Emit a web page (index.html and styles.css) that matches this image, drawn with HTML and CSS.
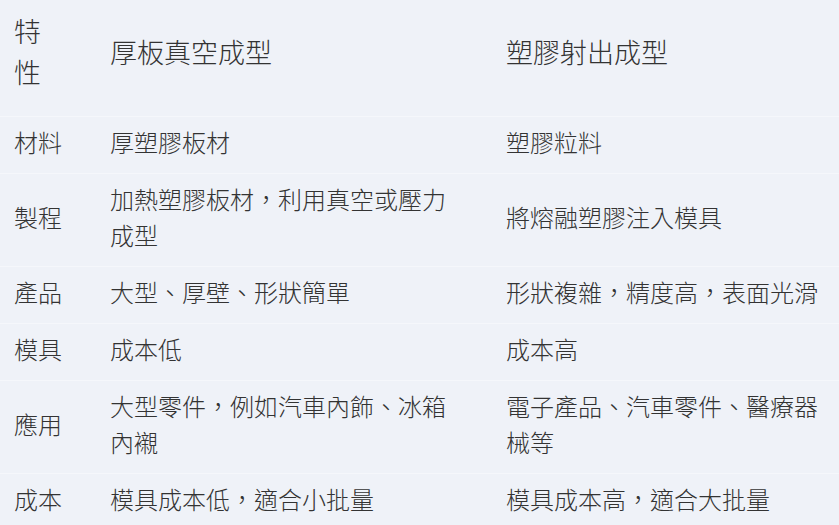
FILE: index.html
```html
<!DOCTYPE html>
<html lang="zh-Hant">
<head>
<meta charset="utf-8">
<link rel="stylesheet" href="styles.css">
</head>
<body>
<table class="cmp">
  <colgroup>
    <col class="c1"><col class="c2"><col class="c3">
  </colgroup>
  <thead>
    <tr class="head">
      <th class="k"><span class="kw">特性</span></th>
      <th class="mid">厚板真空成型</th>
      <th>塑膠射出成型</th>
    </tr>
  </thead>
  <tbody>
    <tr><td class="k">材料</td><td class="mid">厚塑膠板材</td><td>塑膠粒料</td></tr>
    <tr><td class="k">製程</td><td class="mid">加熱塑膠板材，利用真空或壓力成型</td><td>將熔融塑膠注入模具</td></tr>
    <tr><td class="k">產品</td><td class="mid">大型、厚壁、形狀簡單</td><td>形狀複雜，精度高，表面光滑</td></tr>
    <tr><td class="k">模具</td><td class="mid">成本低</td><td>成本高</td></tr>
    <tr><td class="k">應用</td><td class="mid">大型零件，例如汽車內飾、冰箱內襯</td><td>電子產品、汽車零件、醫療器械等</td></tr>
    <tr><td class="k">成本</td><td class="mid">模具成本低，適合小批量</td><td>模具成本高，適合大批量</td></tr>
  </tbody>
</table>
</body>
</html>
```
FILE: styles.css
```css
html, body {
  margin: 0;
  padding: 0;
  background: #eff2f8;
}
body {
  font-family: "Noto Sans CJK TC", "Noto Sans", sans-serif;
  font-weight: 300;
  color: #333333;
}
.cmp {
  width: 839px;
  border-collapse: collapse;
  table-layout: fixed;
}
.c1 { width: 96px; }
.c2 { width: 396px; }
.c3 { width: 347px; }
.cmp th, .cmp td {
  text-align: left;
  padding: 7px 14px 13px 14px;
  vertical-align: middle;
  border-bottom: 1px solid #f5f7fb;
}
.cmp .mid {
  padding-right: 40px;
}
.cmp th {
  font-weight: 300;
  font-size: 27px;
  line-height: 41px;
  padding-top: 10px;
  padding-bottom: 24px;
}
.cmp td {
  font-size: 24px;
  line-height: 36px;
}
.kw {
  display: block;
  width: 30px;
}
```
